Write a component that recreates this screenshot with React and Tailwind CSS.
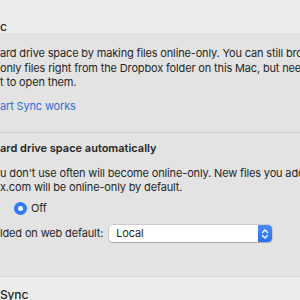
import React from 'react';

function Stepper() {
  return (
    <svg width="8" height="12" viewBox="0 0 8 12" fill="none">
      <path d="M1.5 4.5 L4 2 L6.5 4.5" stroke="white" strokeWidth="1.4" strokeLinecap="round" strokeLinejoin="round" />
      <path d="M1.5 7.5 L4 10 L6.5 7.5" stroke="white" strokeWidth="1.4" strokeLinecap="round" strokeLinejoin="round" />
    </svg>
  );
}

export default function App() {
  return (
    <div className="w-[300px] h-[300px] overflow-hidden bg-[#ececec] text-[11px] tracking-[-0.15px] text-[#262626] font-['Inter','Helvetica_Neue',sans-serif] whitespace-nowrap">

      {/* Section title */}
      <div className="h-[35px] pt-[19px] text-[12px] leading-[16px] font-medium border-b border-[#d9d9d9]">c</div>

      {/* Grouped settings */}
      <div className="h-[242px] bg-[#e3e3e3] border-b border-[#d9d9d9]">
        <div className="pt-[11px] leading-[14.5px]">
          <div>ard drive space by making files online-only. You can still browse</div>
          <div>only files right from the Dropbox folder on this Mac, but need an</div>
          <div>t to open them.</div>
        </div>
        <div className="mt-[8px] leading-[16px] text-[#2f6fd8]">art Sync works</div>

        <div className="mt-[18px] border-t border-[#cfcfcf]" />

        <div className="mt-[7px] leading-[16px] font-semibold tracking-normal">ard drive space automatically</div>
        <div className="mt-[10px] leading-[14px]">
          <div>u don't use often will become online-only. New files you add on</div>
          <div>x.com will be online-only by default.</div>
        </div>

        <div className="mt-[7px] pl-[14px] flex items-center gap-[4px] h-[16px]">
          <span className="w-[13px] h-[13px] rounded-full bg-[#2f7cf6] flex items-center justify-center">
            <span className="w-[5px] h-[5px] rounded-full bg-white" />
          </span>
          <span>Off</span>
        </div>

        <div className="mt-[8px] flex items-center h-[18px]">
          <span>lded on web default:</span>
          <div className="ml-[6px] w-[163px] h-[17px] flex items-stretch bg-white rounded-[4px] shadow-[0_0_0_0.5px_rgba(0,0,0,0.2),0_1px_1px_rgba(0,0,0,0.15)] overflow-hidden">
            <span className="flex-1 pl-[7px] leading-[17px]">Local</span>
            <span className="w-[14px] bg-gradient-to-b from-[#4a8cf7] to-[#2c6ef2] flex items-center justify-center">
              <Stepper />
            </span>
          </div>
        </div>
      </div>

      <div className="pt-[10px] text-[12px] leading-[16px] font-medium">Sync</div>
    </div>
  );
}
